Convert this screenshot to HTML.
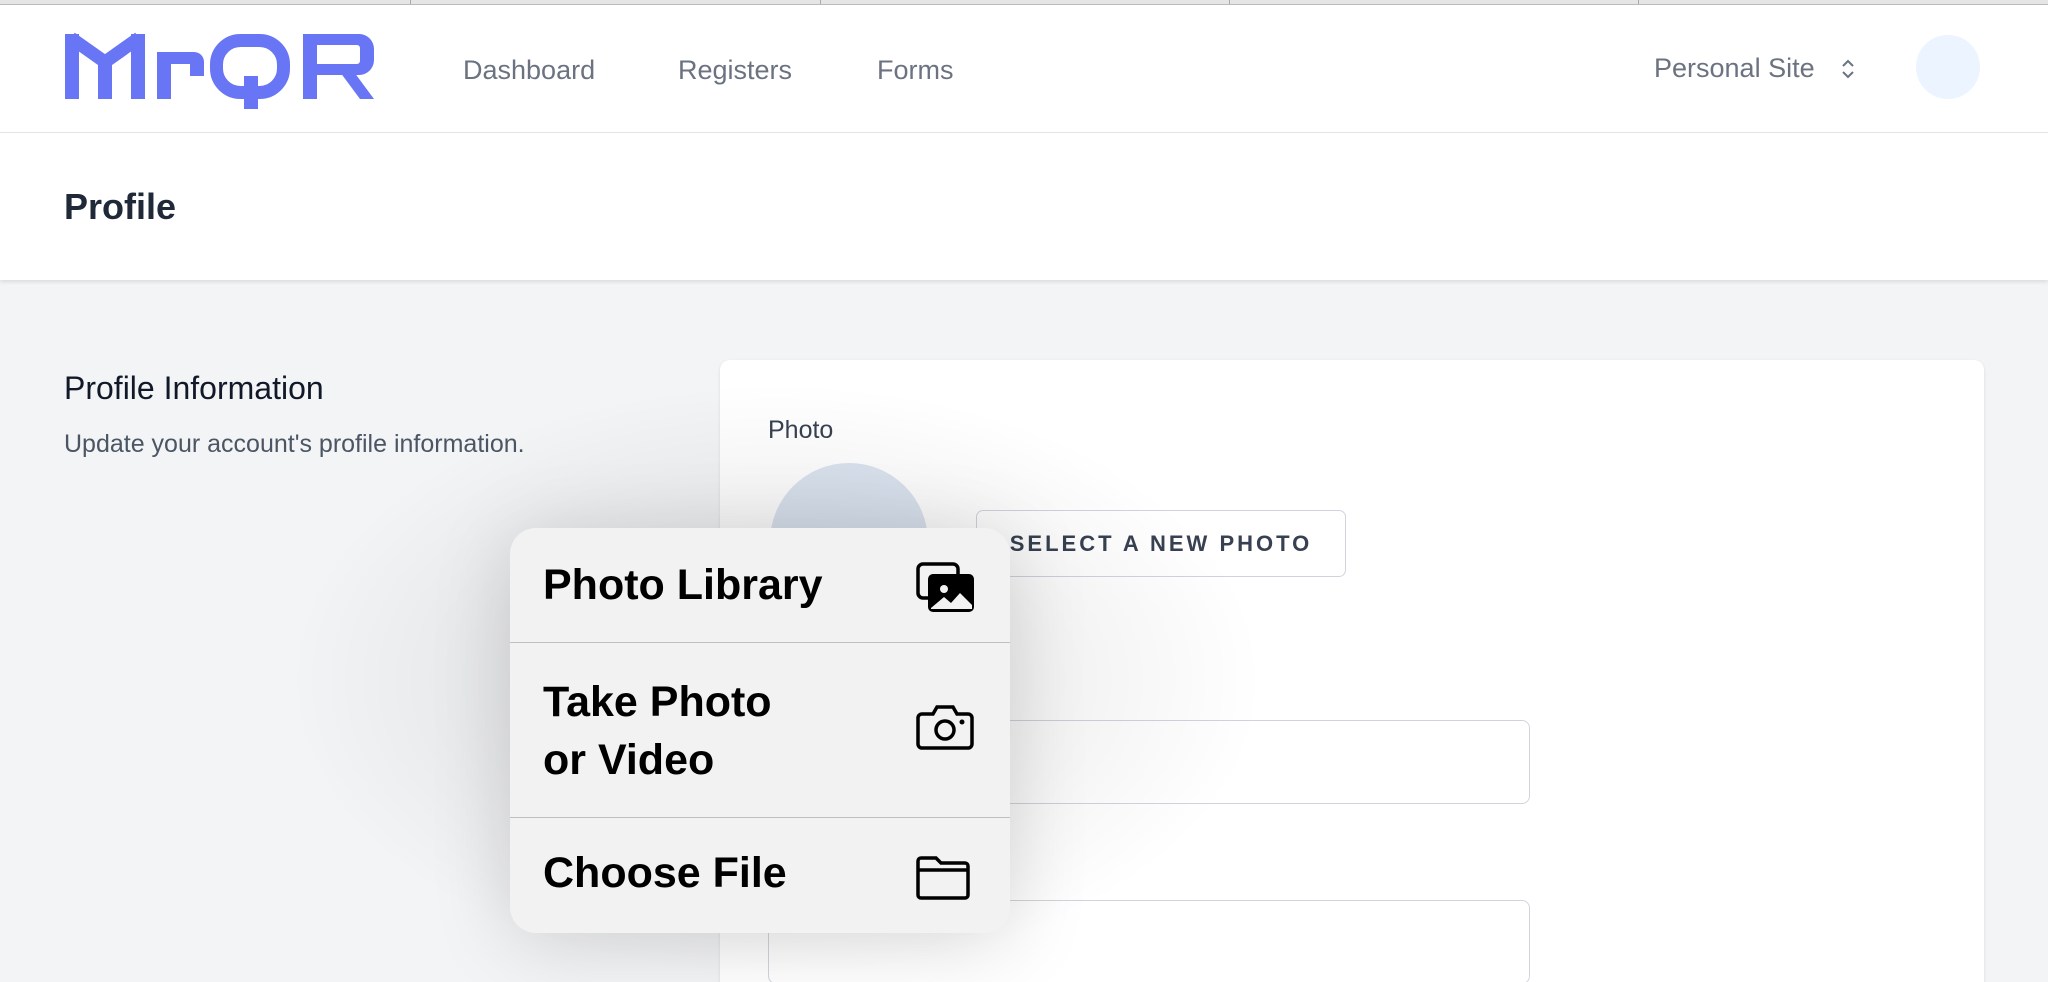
<!DOCTYPE html>
<html><head><style>
*{box-sizing:border-box;margin:0;padding:0}
html,body{width:2048px;height:982px;overflow:hidden}
body{background:#f3f4f6;font-family:"Liberation Sans",sans-serif;position:relative}
.tabs{position:absolute;top:0;left:0;width:2048px;height:5px;background:#e5e5e5;border-bottom:1px solid #bbb}
.tabs div{position:absolute;top:0;height:4px;width:1px;background:#aaa}
header{position:absolute;top:5px;left:0;width:2048px;height:128px;background:#fff;border-bottom:1px solid #e5e7eb}
.nav{position:absolute;top:50px;font-size:27px;color:#6b7280}
.ps{position:absolute;left:1654px;top:48px;font-size:27px;color:#6b7280}
.av{position:absolute;left:1916px;top:30px;width:64px;height:64px;border-radius:50%;background:#ebf4ff}
.ph{position:absolute;top:133px;left:0;width:2048px;height:147px;background:#fff;box-shadow:0 2px 4px rgba(0,0,0,.1)}
.ph h1{position:absolute;left:64px;top:53px;font-size:36px;font-weight:600;color:#1f2937}
.pi{position:absolute;left:64px;top:370px;font-size:32px;color:#111827}
.pd{position:absolute;left:64px;top:430px;font-size:25px;color:#4b5563}
.card{position:absolute;left:720px;top:360px;width:1264px;height:640px;background:#fff;border-radius:10px;box-shadow:0 1px 3px rgba(0,0,0,.1)}
.lbl{position:absolute;left:768px;top:416px;font-size:25px;color:#374151}
.circ{position:absolute;left:770px;top:463px;width:158px;height:158px;border-radius:50%;background:#dbe4f0}
.btn{position:absolute;left:976px;top:510px;width:370px;height:67px;border:1px solid #d1d5db;border-radius:7px;background:#fff;font-size:22px;letter-spacing:3px;color:#374151;font-weight:600;line-height:65px;text-align:center}
.inp{position:absolute;left:768px;width:762px;height:84px;border:1px solid #d1d5db;border-radius:8px;background:#fff}
.shade{position:absolute;left:200px;top:330px;width:1150px;height:700px;background:radial-gradient(ellipse at 50% 50%,rgba(0,0,0,.12),rgba(0,0,0,0) 60%)}
.pop{position:absolute;left:510px;top:528px;width:500px;height:405px;background:#f2f2f2;border-radius:26px;box-shadow:0 10px 80px rgba(0,0,0,.15);overflow:hidden}
.row{position:absolute;left:0;width:500px;border-bottom:1px solid #c0c0c0}
.row span{position:absolute;left:33px;font-size:43px;font-weight:bold;color:#000;line-height:58px}
.row svg{position:absolute;left:406px}
</style></head><body>
<div class="tabs"><div style="left:410px"></div><div style="left:820px"></div><div style="left:1229px"></div><div style="left:1638px"></div></div>
<header>
<svg style="position:absolute;left:0;top:-5px" width="400" height="120" viewBox="0 0 400 120" fill="#6875f5">
<rect x="65" y="34" width="14" height="65"/><rect x="131" y="34" width="14" height="65"/>
<polyline points="71,38 105,62 139,38" fill="none" stroke="#6875f5" stroke-width="13"/>
<rect x="98" y="60" width="14" height="39"/>
<rect x="157" y="52" width="14" height="47"/>
<path d="M157 52 H194 A10 10 0 0 1 204 62 V76 H190 V64 H157Z"/>
<rect x="216.5" y="40.5" width="67" height="52" rx="24" fill="none" stroke="#6875f5" stroke-width="13"/>
<rect x="244" y="76" width="14" height="33"/>
<rect x="303" y="34" width="14" height="65"/>
<path d="M303 34 H359 A15 15 0 0 1 374 49 V60 A15 15 0 0 1 359 75 H303 V64 H357 A3 3 0 0 0 360 61 V48 A3 3 0 0 0 357 45 H303Z"/>
<polygon points="340,72 354,72 374,99 360,99"/>
</svg>
<div class="nav" style="left:463px">Dashboard</div>
<div class="nav" style="left:678px">Registers</div>
<div class="nav" style="left:877px">Forms</div>
<div class="ps">Personal Site</div>
<svg style="position:absolute;left:1841px;top:52px" width="14" height="24" viewBox="0 0 14 24"><path d="M2 9 L7 4 L12 9 M2 15 L7 20 L12 15" fill="none" stroke="#6b7280" stroke-width="2"/></svg>
<div class="av"></div>
</header>
<div class="ph"><h1>Profile</h1></div>
<div class="pi">Profile Information</div>
<div class="pd">Update your account's profile information.</div>
<div class="card"></div>
<div class="lbl">Photo</div>
<div class="circ"></div>
<div class="btn">SELECT A NEW PHOTO</div>
<div class="inp" style="top:720px"></div>
<div class="inp" style="top:900px"></div>
<div class="shade"></div>
<div class="pop">
<div class="row" style="top:0;height:115px"><span style="top:28px">Photo Library</span>
<svg style="top:34px" width="60" height="52" viewBox="0 0 60 52"><rect x="2" y="2" width="40" height="34" rx="5" fill="none" stroke="#000" stroke-width="3.5"/><rect x="12" y="12" width="46" height="38" rx="5" fill="#000"/><circle cx="28" cy="27" r="4" fill="#f2f2f2"/><path d="M15 46 L28 35 L35 41 L44 31 L56 43 L56 47 L15 47Z" fill="#f2f2f2"/></svg></div>
<div class="row" style="top:115px;height:175px"><span style="top:30px">Take Photo<br>or Video</span>
<svg style="top:61px" width="58" height="46" viewBox="0 0 58 46"><path d="M6 10 H17 L21 3 H37 L41 10 H52 A4 4 0 0 1 56 14 V40 A4 4 0 0 1 52 44 H6 A4 4 0 0 1 2 40 V14 A4 4 0 0 1 6 10Z" fill="none" stroke="#000" stroke-width="3.5"/><circle cx="29" cy="26" r="9" fill="none" stroke="#000" stroke-width="3.5"/><circle cx="46" cy="18" r="2.5" fill="#000"/></svg></div>
<div class="row" style="top:290px;height:115px;border:none"><span style="top:26px">Choose File</span>
<svg style="top:38px" width="54" height="44" viewBox="0 0 54 44"><path d="M5 2 H20 L25 7 H49 A3 3 0 0 1 52 10 V39 A3 3 0 0 1 49 42 H5 A3 3 0 0 1 2 39 V5 A3 3 0 0 1 5 2Z M2 14 H52" fill="none" stroke="#000" stroke-width="3.5"/></svg></div>
</div>
</body></html>
